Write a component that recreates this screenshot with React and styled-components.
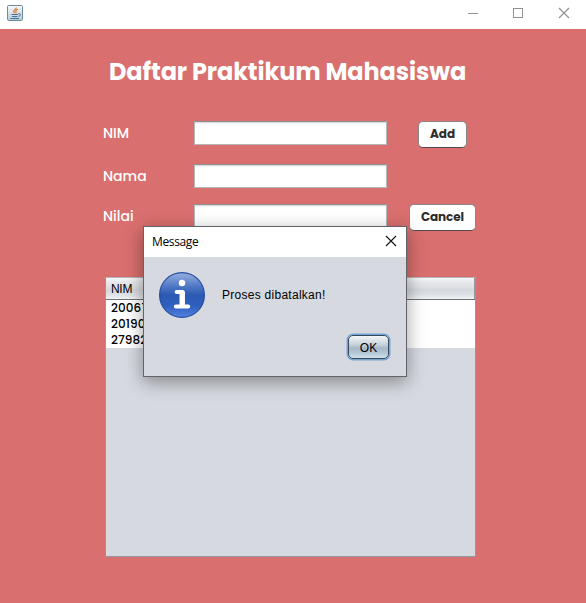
import React from "react";
import styled, { createGlobalStyle } from "styled-components";

const GlobalStyle = createGlobalStyle`
  *, *::before, *::after { box-sizing: border-box; }
  body { margin: 0; overflow: hidden; background: #d96f6e; }
`;

const geometric = `
  font-family: Poppins, Inter, sans-serif;
  font-feature-settings: "cv11" 1, "calt" 0;
`;

const Window = styled.div`
  position: relative;
  width: 586px;
  height: 603px;
  display: flex;
  flex-direction: column;
  background: #d96f6e;
  font-family: "Liberation Sans", Arial, sans-serif;
`;

const TitleBar = styled.header`
  height: 29px;
  flex: none;
  display: flex;
  justify-content: space-between;
  background: #fff;
`;

const AppIcon = styled.svg`
  display: block;
  margin: 5px 0 0 7px;
`;

const Controls = styled.svg`
  display: block;
`;

const Content = styled.main`
  flex: 1;
  display: flex;
  flex-direction: column;
`;

const Title = styled.h1`
  ${geometric}
  margin: 25px 0 0 109px;
  height: 36px;
  line-height: 36px;
  font-size: 24px;
  font-weight: 700;
  letter-spacing: ${(p) => p.$spacing}px;
  color: #fff;
  white-space: nowrap;
`;

const Form = styled.form`
  display: grid;
  grid-template-columns: 91px 193px 1fr;
  grid-template-rows: 43px 40px 27px;
  margin: 31px 0 0 103px;
  width: 373px;
`;

const Label = styled.label`
  ${geometric}
  height: 24px;
  line-height: 24px;
  font-size: 14px;
  font-weight: 500;
  color: #fff;
`;

const Field = styled.input`
  width: 193px;
  height: 24px;
  padding: 0 6px;
  border: 1px solid #b4b8bd;
  border-top-color: #8b9091;
  border-radius: 0;
  outline: none;
  background: linear-gradient(#dcdddf 0 1px, #f4f4f5 1px 2px, #fff 2px);
`;

const Button = styled.button`
  ${geometric}
  justify-self: end;
  width: ${(p) => p.$width}px;
  height: 27px;
  margin-right: ${(p) => p.$inset || 0}px;
  padding: 0 0 1px;
  border: 1px solid #8b8488;
  border-bottom-color: #54494e;
  border-radius: 5px;
  background: #fff;
  color: #2c2c2c;
  font-size: 12px;
  line-height: 22px;
  font-weight: 700;
  letter-spacing: ${(p) => p.$spacing || 0}px;
`;

const TablePane = styled.section`
  width: 371px;
  height: 280px;
  margin: 46px 0 0 105px;
  border: 1px solid #9297a1;
  border-top-color: #b4b6bd;
  background: #d6d9e0;
`;

const TableHead = styled.div`
  height: 22px;
  padding-left: 5px;
  border-right: 1px solid #9297a1;
  border-bottom: 1px solid #6b7078;
  background: linear-gradient(#f8f8fa 0, #e7e9ec 4px, #dcdee2 10px, #d5d8dd 12px, #dfe2e7 17px, #f0f2f6 21px);
  font-size: 12px;
  line-height: 22px;
  letter-spacing: -0.3px;
  color: #000;
`;

const Row = styled.div`
  ${geometric}
  height: 16px;
  padding-left: 5px;
  background: #fff;
  font-size: 12px;
  line-height: 16px;
  font-weight: 500;
  letter-spacing: 0.1px;
  color: #000;
`;

const Dialog = styled.div`
  position: absolute;
  left: 143px;
  top: 226px;
  width: 264px;
  height: 151px;
  display: flex;
  flex-direction: column;
  border: 1px solid #61646a;
  background: #d6d9e0;
  box-shadow: 0 5px 17px rgba(0, 0, 0, 0.38);
`;

const DialogBar = styled.div`
  height: 30px;
  flex: none;
  display: flex;
  justify-content: space-between;
  padding: 0 9px 0 8px;
  background: #fff;
  font: 12px/30px "Open Sans", "Noto Sans", sans-serif;
  letter-spacing: -0.36px;
  color: #000;
`;

const CloseIcon = styled.svg`
  display: block;
  margin-top: 8px;
`;

const Message = styled.div`
  display: flex;
  align-items: flex-start;
  margin: 14px 0 0 14px;
`;

const MessageText = styled.p`
  margin: 17px 0 0 16px;
  font-size: 12px;
  line-height: 14px;
  letter-spacing: 0.27px;
  color: #000;
`;

const OkButton = styled.button`
  width: 41px;
  height: 24px;
  margin: 16px 17px 0 auto;
  padding: 2px 0 0;
  border: 1px solid #36495c;
  border-radius: 5px;
  box-shadow: 0 0 0 1.5px #76a3cf;
  background: linear-gradient(#f3f6f8 0, #cfd9e1 7px, #bac9d4 10px, #a4b8c8 12px, #b3c7d5 17px, #cbdfec 22px);
  font: 12px/20px "Liberation Sans", Arial, sans-serif;
  color: #000;
`;

function JavaIcon() {
  return (
    <AppIcon width="16" height="16" viewBox="0 0 16 16" fill="none">
      <defs>
        <linearGradient id="tile" x1="0" y1="0" x2="0" y2="1">
          <stop offset="0" stopColor="#f7fafb" />
          <stop offset="1" stopColor="#b5cad8" />
        </linearGradient>
      </defs>
      <rect x=".5" y=".5" width="15" height="15" rx="1.2" fill="url(#tile)" stroke="#718a9a" />
      <path d="M9.3 2.6C9.5 4.3 6.5 4.7 6.6 6.2c0 .9 1 1.1 1.1 1.9M10.8 4.4C8.7 5 8.3 6 9 6.7c.5.5 0 1-.4 1.4" stroke="#e78532" strokeWidth="1.3" />
      <path d="M4.5 9.5h6.5M5.1 11.5h5.3M3.5 13.5h8.5M11.2 8.8c3-.7 3 2 .3 2.5" stroke="#466f91" strokeWidth="1" />
    </AppIcon>
  );
}

function WindowControls() {
  return (
    <Controls width="120" height="29" fill="none" stroke="#929292">
      <path d="M2 13.5h10" />
      <rect x="47.5" y="8.5" width="9" height="9" />
      <path d="M93 8l10 10M103 8l-10 10" strokeWidth="1.2" />
    </Controls>
  );
}

function InfoIcon() {
  return (
    <svg width="48" height="48" viewBox="0 0 48 48">
      <defs>
        <linearGradient id="info" x1="0" y1="0" x2="0" y2="1">
          <stop offset="0" stopColor="#98b0df" />
          <stop offset=".3" stopColor="#5079c6" />
          <stop offset=".5" stopColor="#2c5ab2" />
          <stop offset=".75" stopColor="#305fc0" />
          <stop offset="1" stopColor="#5484e0" />
        </linearGradient>
      </defs>
      <circle cx="24" cy="24" r="22.4" fill="url(#info)" stroke="#2450a1" strokeWidth="1.2" />
      <circle cx="24" cy="12" r="3.2" fill="#fff" />
      <path d="M18.6 21h6v14.5M17.8 35.6h12.4" fill="none" stroke="#fff" strokeWidth="4" strokeLinecap="round" strokeLinejoin="round" />
      <path d="M24.2 20.5v15" stroke="#fff" strokeWidth="5.4" />
    </svg>
  );
}

const records = ["2006780", "2019045", "2798213"];

export default function App() {
  return (
    <Window>
      <GlobalStyle />
      <TitleBar>
        <JavaIcon />
        <WindowControls />
      </TitleBar>
      <Content>
        <Title $spacing={-0.12}>Daftar Praktikum Mahasiswa</Title>
        <Form>
          <Label>NIM</Label>
          <Field />
          <Button type="button" $width={49} $inset={9}>Add</Button>
          <Label>Nama</Label>
          <Field />
          <span />
          <Label>Nilai</Label>
          <Field />
          <Button type="button" $width={67} $spacing={-0.1}>Cancel</Button>
        </Form>
        <TablePane>
          <TableHead>NIM</TableHead>
          {records.map((id) => <Row key={id}>{id}</Row>)}
        </TablePane>
      </Content>
      <Dialog role="dialog">
        <DialogBar>
          Message
          <CloseIcon width="12" height="12" fill="none" stroke="#111" strokeWidth="1.1">
            <path d="M1 1l10 10M11 1L1 11" />
          </CloseIcon>
        </DialogBar>
        <Message>
          <InfoIcon />
          <MessageText>Proses dibatalkan!</MessageText>
        </Message>
        <OkButton>OK</OkButton>
      </Dialog>
    </Window>
  );
}
